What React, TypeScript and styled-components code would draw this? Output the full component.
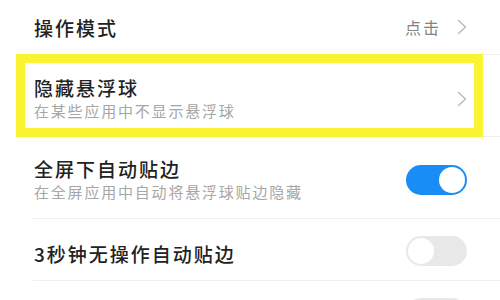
import React from "react";
import styled, { createGlobalStyle } from "styled-components";

const Global = createGlobalStyle`
  html, body { margin: 0; padding: 0; background: #ffffff; }
  body {
    width: 500px;
    height: 300px;
    overflow: hidden;
    font-family: "Noto Sans CJK SC", "Noto Sans", sans-serif;
  }
`;

const List = styled.div`
  display: flex;
  flex-direction: column;
  width: 500px;
`;

const Row = styled.div`
  position: relative;
  padding-left: 33px;
`;

const RowBody = styled.div<{ $h: number; $pt: number }>`
  display: flex;
  align-items: center;
  box-sizing: border-box;
  height: ${(p) => p.$h}px;
  padding-top: ${(p) => p.$pt}px;
  padding-right: 33px;
  border-bottom: 1px solid #efefef;
`;

const TextBlock = styled.div<{ $shift?: number }>`
  flex: 1;
  display: flex;
  flex-direction: column;
  padding-left: 1px;
  padding-top: ${(p) => p.$shift ?? 0}px;
`;

const Title = styled.div`
  font-size: 19px;
  line-height: 24px;
  letter-spacing: 2px;
  font-weight: 500;
  color: #222222;
  white-space: nowrap;
`;

const Subtitle = styled.div`
  font-size: 15px;
  line-height: 20px;
  letter-spacing: 1.8px;
  color: #a6a6a6;
  margin-top: 1px;
  white-space: nowrap;
`;

const Value = styled.span`
  font-size: 16px;
  line-height: 20px;
  letter-spacing: 2px;
  color: #828282;
  margin-right: 16px;
`;

const Trail = styled.div`
  display: flex;
  align-items: center;
`;

const Track = styled.div<{ $on: boolean }>`
  display: flex;
  align-items: center;
  justify-content: ${(p) => (p.$on ? "flex-end" : "flex-start")};
  box-sizing: border-box;
  width: 61px;
  height: 30px;
  padding: 2px;
  border-radius: 15px;
  background: ${(p) => (p.$on ? "#188df5" : "#e8e8e8")};
`;

const Knob = styled.div`
  width: 26px;
  height: 26px;
  border-radius: 50%;
  background: #ffffff;
`;

const Highlight = styled.div`
  position: absolute;
  left: 16px;
  right: 17px;
  top: -1px;
  bottom: 0;
  border: 9px solid #f8f432;
  pointer-events: none;
`;

const Chevron = () => (
  <svg width="10" height="16" viewBox="0 0 10 16" fill="none">
    <path
      d="M1.5 1.5 L8.5 8 L1.5 14.5"
      stroke="#b9b9b9"
      strokeWidth="1.4"
      strokeLinecap="round"
      strokeLinejoin="round"
    />
  </svg>
);

const Toggle = ({ on }: { on: boolean }) => (
  <Track $on={on}>
    <Knob />
  </Track>
);

export default function App() {
  return (
    <>
      <Global />
      <List>
        <Row>
          <RowBody $h={55} $pt={0}>
            <TextBlock $shift={2}>
              <Title>操作模式</Title>
            </TextBlock>
            <Trail>
              <Value>点击</Value>
              <Chevron />
            </Trail>
          </RowBody>
        </Row>
        <Row>
          <RowBody $h={82} $pt={6}>
            <TextBlock $shift={-2}>
              <Title>隐藏悬浮球</Title>
              <Subtitle>在某些应用中不显示悬浮球</Subtitle>
            </TextBlock>
            <Chevron />
          </RowBody>
          <Highlight />
        </Row>
        <Row>
          <RowBody $h={82} $pt={4}>
            <TextBlock>
              <Title>全屏下自动贴边</Title>
              <Subtitle>在全屏应用中自动将悬浮球贴边隐藏</Subtitle>
            </TextBlock>
            <Toggle on />
          </RowBody>
        </Row>
        <Row>
          <RowBody $h={62} $pt={3}>
            <TextBlock $shift={5}>
              <Title>3秒钟无操作自动贴边</Title>
            </TextBlock>
            <Toggle on={false} />
          </RowBody>
        </Row>
        <Row>
          <RowBody $h={62} $pt={3}>
            <TextBlock $shift={5}>
              <Title></Title>
            </TextBlock>
            <Toggle on={false} />
          </RowBody>
        </Row>
      </List>
    </>
  );
}
